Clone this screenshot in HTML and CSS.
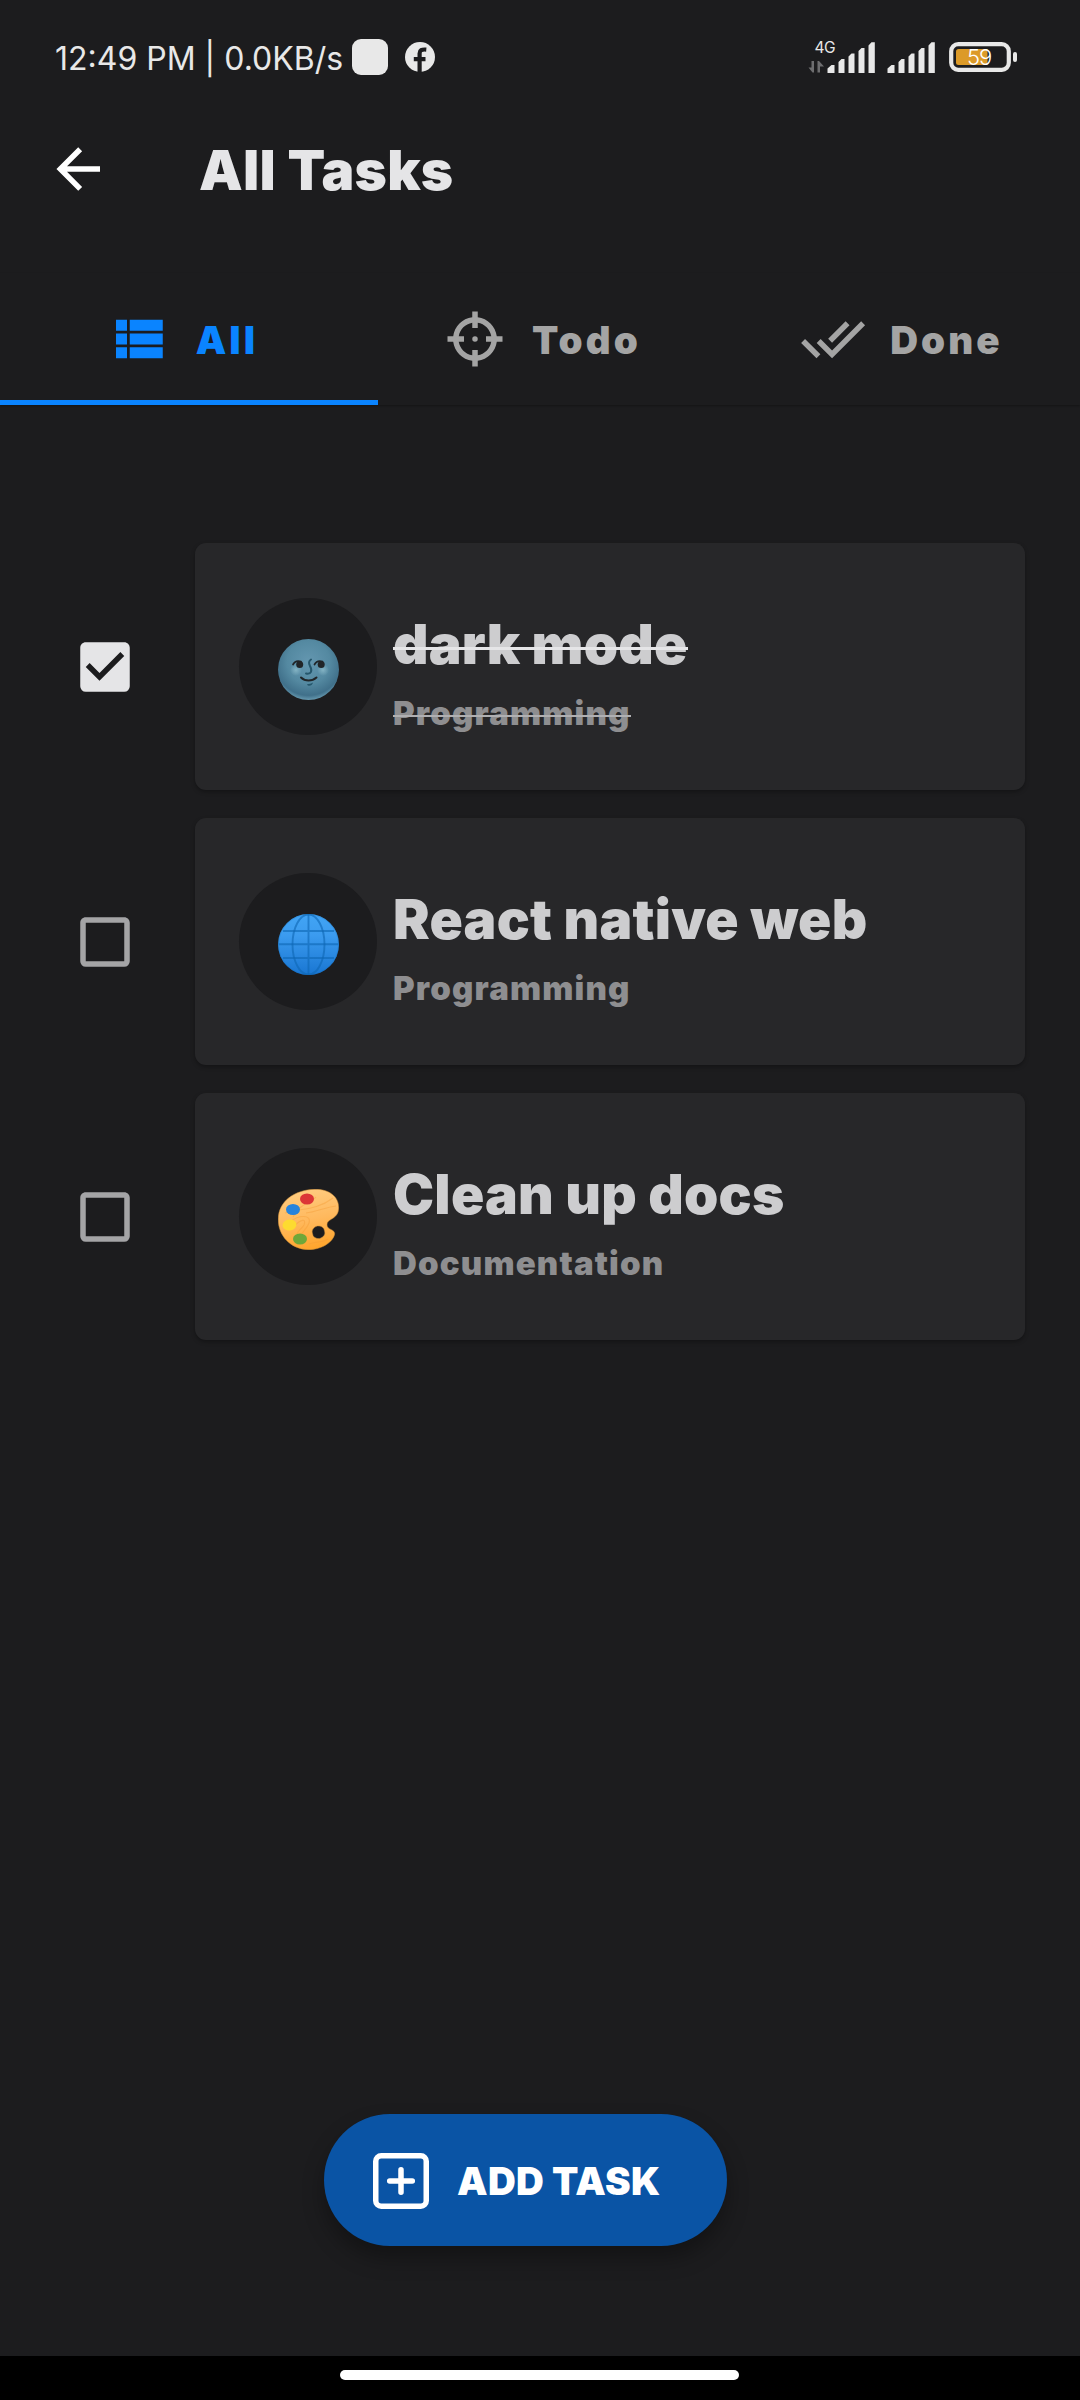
FILE: index.html
```html
<!DOCTYPE html>
<html lang="en">
<head>
<meta charset="utf-8">
<title>All Tasks</title>
<link rel="stylesheet" href="styles.css">
</head>
<body>
<div class="screen">
  <div class="status">
    <span class="status-text">12:49 PM | 0.0KB/s</span>
    <span class="status-square"></span>
    <svg class="status-fb" viewBox="0 0 30 30" width="30" height="30"><circle cx="15" cy="15" r="15" fill="#e8e8e8"/><path d="M14.600 30V11.500C14.600 8.200 16.500 7.200 21.300 7.600M8.800 17.200H20.500" fill="none" stroke="#1c1c1e" stroke-width="4.200"/></svg>
    <svg class="status-right" viewBox="0 0 212 40" width="212" height="40">
      <text class="net" x="6.500" y="14.500">4G</text>
      <path fill="#6d6d6f" d="M6 23v11.500h-1.500L0.500 29.500h3V23zM9.500 34.500V23h1.500l5 5.500h-4v6z"/>
      <g fill="#e8e8e8">
        <path id="bars" d="M19.500 35v-4.500l4-3.500h3v8zM30.500 35V24l3-3h3v14zM40.500 35V18.500l3-3h3V35zM50.500 35V13l3-3h3v25zM60.500 35V7.500l3-3.300h3.300V35z"/>
        <use href="#bars" x="60"/>
      </g>
      <rect x="143.200" y="6.200" width="57.600" height="25.600" rx="7" fill="none" stroke="#e8e8e8" stroke-width="4.200"/>
      <path fill="#dc9a28" d="M150.500 11h29v16h-29a2.500 2.500 0 0 1-2.500-2.500v-11a2.500 2.500 0 0 1 2.500-2.500z"/>
      <rect x="205" y="14" width="4" height="10" rx="2" fill="#e8e8e8"/>
      <text class="level" x="159" y="27">59</text>
    </svg>
  </div>

  <header class="header">
    <svg class="icon" viewBox="0 0 24 24"><path fill="#fff" d="M20,11V13H8L13.500,18.500L12.080,19.920L4.160,12L12.080,4.080L13.500,5.500L8,11H20Z"/></svg>
    <h1 class="title">All Tasks</h1>
  </header>

  <nav class="tabs">
    <div class="tab active"><svg class="icon" viewBox="0 0 24 24"><path d="M9,5V9H21V5M9,19H21V15H9M9,14H21V10H9M4,9H8V5H4M4,19H8V15H4M4,14H8V10H4V14Z"/></svg><span>All</span></div>
    <div class="tab"><svg class="icon" viewBox="0 0 24 24"><path d="M11,2V4.070C7.380,4.530 4.530,7.380 4.070,11H2V13H4.070C4.530,16.620 7.380,19.470 11,19.930V22H13V19.930C16.620,19.470 19.470,16.620 19.930,13H22V11H19.930C19.470,7.380 16.620,4.530 13,4.070V2M11,6.080V8H13V6.090C15.500,6.500 17.500,8.500 17.920,11H16V13H17.910C17.500,15.500 15.500,17.500 13,17.920V16H11V17.910C8.500,17.500 6.500,15.500 6.080,13H8V11H6.090C6.500,8.500 8.500,6.500 11,6.080M12,11A1,1 0 0,0 11,12A1,1 0 0,0 12,13A1,1 0 0,0 13,12A1,1 0 0,0 12,11Z"/></svg><span>Todo</span></div>
    <div class="tab"><svg class="icon" viewBox="0 0 24 24"><path d="M0.410,13.410L6,19L7.410,17.580L1.830,12M22.240,5.580L11.660,16.170L7.500,12L6.070,13.410L11.660,19L23.660,7M18,7L16.590,5.580L10.240,11.930L11.660,13.340L18,7Z"/></svg><span>Done</span></div>
  </nav>

  <main class="list">
    <div class="task done">
      <svg class="icon check" viewBox="0 0 24 24"><path fill-rule="evenodd" d="M10,17L5,12L6.410,10.580L10,14.170L17.590,6.580L19,8ZM19,3H5C3.890,3 3,3.890 3,5V19A2,2 0 0,0 5,21H19A2,2 0 0,0 21,19V5C21,3.890 20.100,3 19,3Z"/></svg>
      <div class="card">
        <div class="disc">
          <svg class="emoji" viewBox="0 0 61 61">
            <defs>
              <radialGradient id="moon" cx=".5" cy=".38" r=".64"><stop offset="0" stop-color="#6497b0"/><stop offset=".55" stop-color="#5489a1"/><stop offset=".85" stop-color="#40708a"/><stop offset="1" stop-color="#6fa3b9"/></radialGradient>
              <radialGradient id="cheek"><stop offset="0" stop-color="#8dbccb" stop-opacity=".8"/><stop offset="1" stop-color="#8dbccb" stop-opacity="0"/></radialGradient>
            </defs>
            <circle cx="30.500" cy="30.500" r="30.500" fill="url(#moon)"/>
            <circle cx="18" cy="31" r="6" fill="url(#cheek)"/><circle cx="45" cy="31" r="6" fill="url(#cheek)"/>
            <g fill="none" stroke-linecap="round">
              <path d="M15 25.500C16.500 22.500 19.500 21.500 23 22.500M36.500 25.500C38 22.500 41 21.500 44.500 22.500" stroke="#212528" stroke-width="1.700"/>
              <path d="M33 20.500C30.500 22 30.500 24 32 27C34.500 31.500 33.500 35.500 28 34.500" stroke="#25566b" stroke-width="2"/>
              <path d="M23 38.500C27 42.500 34 42.500 38.500 38.500" stroke="#212528" stroke-width="2"/>
            </g>
            <circle cx="21.700" cy="25.500" r="3.500" fill="#212528"/><circle cx="43.200" cy="25.500" r="3.500" fill="#212528"/>
            <path d="M29 45.200C31.500 45.200 33 44.700 35 43.500C34.500 46.800 30 48 29 45.200z" fill="#25566b"/>
          </svg>
        </div>
        <div class="text"><div class="name"><span>dark mode</span></div><div class="cat"><span>Programming</span></div></div>
      </div>
    </div>
    <div class="task">
      <svg class="icon check" viewBox="0 0 24 24"><path d="M19,3H5C3.890,3 3,3.890 3,5V19A2,2 0 0,0 5,21H19A2,2 0 0,0 21,19V5C21,3.890 20.100,3 19,3M19,5V19H5V5H19Z"/></svg>
      <div class="card">
        <div class="disc">
          <svg class="emoji" viewBox="0 0 61 61">
            <defs><linearGradient id="sea" x1="0" y1="0" x2="0" y2="1"><stop offset="0" stop-color="#42a5f5"/><stop offset=".35" stop-color="#3b9bef"/><stop offset="1" stop-color="#1976d2"/></linearGradient></defs>
            <circle cx="30.500" cy="30.500" r="30.500" fill="url(#sea)"/>
            <g fill="none" stroke="#0f67b5" stroke-opacity=".62" stroke-width="1.900"><circle cx="30.500" cy="30.500" r="30" stroke-opacity=".25" stroke-width="1"/><path d="M30.500 0V61M0.500 30.200H60.500M5 17H56M5 44H56"/><ellipse cx="30.500" cy="30.500" rx="16" ry="30"/></g>
          </svg>
        </div>
        <div class="text"><div class="name"><span>React native web</span></div><div class="cat"><span>Programming</span></div></div>
      </div>
    </div>
    <div class="task">
      <svg class="icon check" viewBox="0 0 24 24"><path d="M19,3H5C3.890,3 3,3.890 3,5V19A2,2 0 0,0 5,21H19A2,2 0 0,0 21,19V5C21,3.890 20.100,3 19,3M19,5V19H5V5H19Z"/></svg>
      <div class="card">
        <div class="disc">
          <svg class="emoji" viewBox="0 0 61 61">
            <defs>
              <linearGradient id="wood" x1=".4" y1="0" x2=".6" y2="1"><stop offset="0" stop-color="#ffcc80"/><stop offset=".5" stop-color="#ffb95e"/><stop offset="1" stop-color="#ffa42a"/></linearGradient>
              <clipPath id="board"><path d="M36 .3C50 -.3 61 7 60.700 19C60.300 31 49 29 49 36C49 41 57 40 56.700 45C55 54 42 61 30 60.700C12 60 0 46 .2 30C.5 12 17 1 36 .3z"/></clipPath>
            </defs>
            <path fill-rule="evenodd" fill="url(#wood)" stroke="#c98a36" stroke-width=".5" d="M36 .3C50 -.3 61 7 60.700 19C60.300 31 49 29 49 36C49 41 57 40 56.700 45C55 54 42 61 30 60.700C12 60 0 46 .2 30C.5 12 17 1 36 .3zM34.500 44.500A6.200 5.500 -12 1 0 46.500 42A6.200 5.500 -12 1 0 34.500 44.500z"/>
            <g clip-path="url(#board)" fill="none" stroke="#f29b35" stroke-opacity=".4" stroke-width="1.100"><path d="M12 33C20 26 34 25 31 34C29 40 24 42 23 47M16 38C22 30 29 29 26 36C24 40 20 41 19 45M7 24C22 19 38 22 55 9M28 24C38 23 48 18 58 17M38 8C33 14 22 14 15 28M31 55C40 52 44 54 50 50"/></g>
            <ellipse cx="29" cy="10" rx="7" ry="5.600" fill="#dc3536"/>
            <ellipse cx="15" cy="20.500" rx="7" ry="5.600" fill="#2683dc"/>
            <ellipse cx="11.500" cy="36" rx="7" ry="5.500" fill="#fddb30" transform="rotate(-8 11.500 36)"/>
            <ellipse cx="22" cy="50" rx="7" ry="5.600" fill="#6fa739"/>
          </svg>
        </div>
        <div class="text"><div class="name"><span>Clean up docs</span></div><div class="cat"><span>Documentation</span></div></div>
      </div>
    </div>
  </main>

  <button class="add">
    <svg viewBox="0 0 56 56" width="56" height="56" fill="none" stroke="#fff" stroke-width="5.500"><rect x="2.750" y="2.750" width="50.500" height="50.500" rx="5.500"/><path d="M28 16.700V39.300M16.700 28H39.300" stroke-linecap="round"/></svg>
    <span>ADD TASK</span>
  </button>

  <div class="gesture"><div class="pill"></div></div>
</div>
</body>
</html>
```

FILE: styles.css
```css
* { box-sizing: border-box; }
body { margin: 0; background: #1c1c1e; font-family: Inter, "Liberation Sans", sans-serif; }
.screen { width: 1080px; height: 2400px; display: flex; flex-direction: column; background: #1c1c1e; overflow: hidden; }

.status { height: 116px; padding: 0 60px 0 55px; display: flex; align-items: center; color: #e8e8e8; }
.status-text { width: 289px; font-size: 32px; font-weight: 400; white-space: nowrap; line-height: 40px; padding-top: 1px; }
.status-square { width: 36px; height: 36px; border-radius: 9px; background: #e8e8e8; margin-left: 8px; margin-top: -2px; }
.status-fb { margin-left: 17px; margin-top: -2px; }
.status-right { margin-left: auto; overflow: visible; }
.net { font-size: 15.500px; fill: #e8e8e8; letter-spacing: -.5px; }
.level { font-size: 22px; font-weight: 300; fill: #fff; letter-spacing: -1px; }

.icon { width: 66px; height: 66px; flex: none; }
.header { height: 106px; padding-left: 45px; display: flex; align-items: center; }
.title { margin: 2px 0 0 88px; font-size: 55px; line-height: 66px; font-weight: 900; letter-spacing: .3px; color: #e5e5e7; }

.tabs { height: 132px; margin-top: 51px; display: grid; grid-template-columns: repeat(3, 1fr); position: relative; box-shadow: 0 1px 2px rgba(0, 0, 0, .3); }
.tabs::after { content: ""; position: absolute; left: 0; bottom: 0; width: 378px; height: 5px; background: #0a84ff; }
.tab { display: flex; align-items: center; justify-content: center; gap: 24px; font-size: 38.500px; font-weight: 900; letter-spacing: 3.100px; color: #a4a4a4; fill: #a4a4a4; }
.tab span { margin: 1px -3px 0 0; }
.active { gap: 25px; color: #0a84ff; fill: #0a84ff; }

.list { margin-top: 138px; padding: 0 55px 0 72px; display: flex; flex-direction: column; gap: 28px; }
.task { display: flex; align-items: center; height: 247px; gap: 57px; }
.check { fill: #a4a4a6; }
.done .check { fill: #e5e5e7; }
.card { flex: 1; height: 247px; padding-left: 44px; border-radius: 11px; background: #272729; display: flex; align-items: center; box-shadow: 0 2px 4px rgba(0, 0, 0, .3); }
.disc { width: 138px; height: 137px; border-radius: 50%; background: #1c1c1e; display: flex; align-items: center; justify-content: center; padding-top: 6px; }
.emoji { width: 61px; height: 61px; }
.text { margin-left: 16px; display: flex; flex-direction: column; align-items: flex-start; gap: 16px; padding-top: 10px; }
.name { position: relative; font-size: 55px; line-height: 66px; font-weight: 900; letter-spacing: .25px; color: #cdcdcf; white-space: nowrap; }
.cat { position: relative; font-size: 33px; line-height: 40px; font-weight: 900; letter-spacing: 1.150px; color: #8e8e90; white-space: nowrap; }
.done .name::after, .done .cat::after { content: ""; position: absolute; left: 0; right: 0; }
.done .name::after { top: 36px; height: 3px; background: #e5e5e7; }
.done .cat::after { top: 22px; height: 2px; background: #b0b0b2; }

.add { margin: auto 0 110px 324px; width: 403px; height: 132px; padding: 2px 0 0 49px; border: 0; border-radius: 66px; background: #0a54a5; color: #fff; font: 900 38.500px/48px Inter, sans-serif; letter-spacing: .3px; display: flex; align-items: center; gap: 28px; box-shadow: 0 12px 22px rgba(0, 0, 0, .32); }
.gesture { height: 44px; background: #000; display: flex; justify-content: center; padding: 14px 2px 0 0; }
.pill { width: 399px; height: 10px; border-radius: 5px; background: #fff; }
```
